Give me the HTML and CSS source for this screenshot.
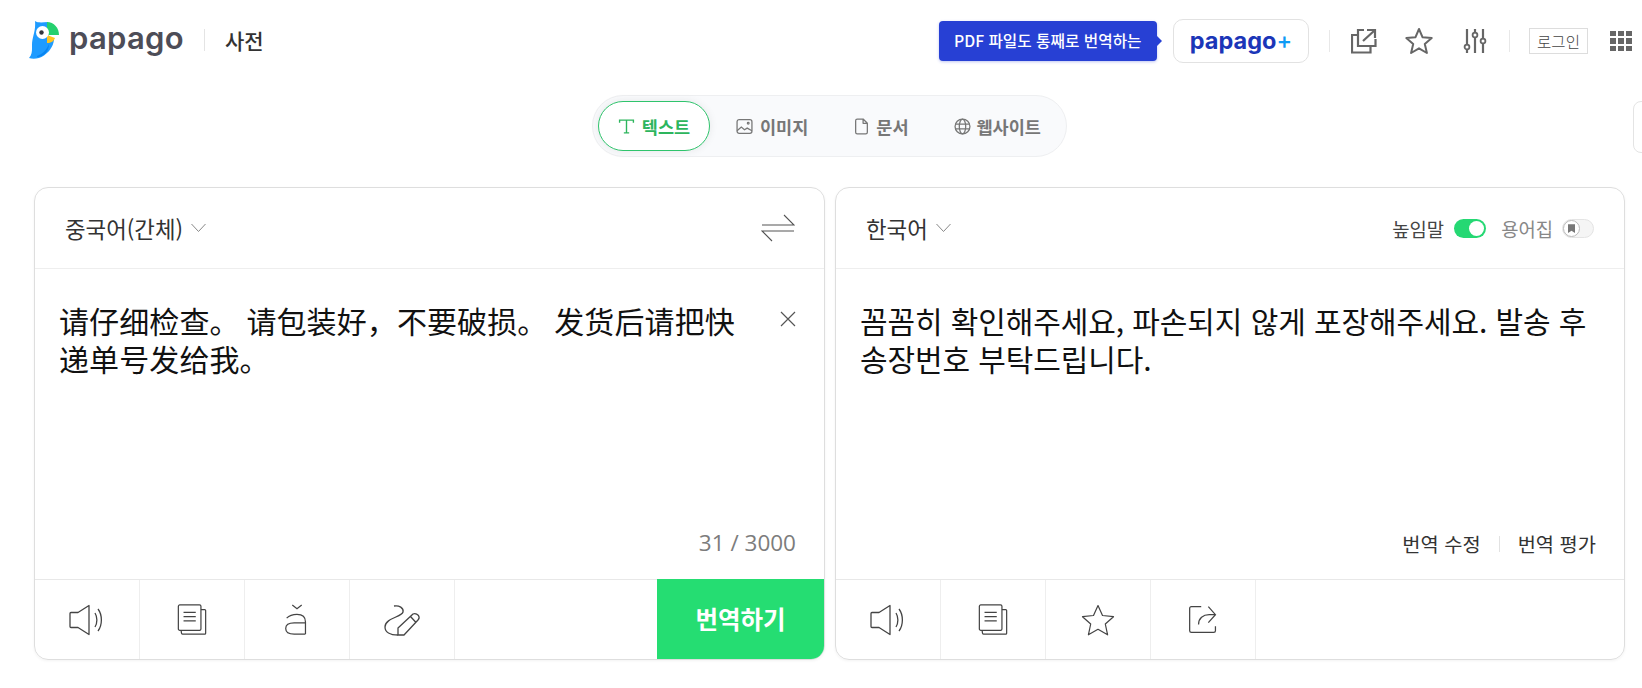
FILE: index.html
```html
<!DOCTYPE html>
<html lang="ko">
<head>
    <meta charset="utf-8">
    <title>papago</title>
    <link rel="stylesheet" href="styles.css">
</head>
<body>

<div class="top">
    <div class="brand">
        <svg class="parrot" viewBox="0 0 30 38">
            <path fill="#1e9bff" d="M6 0C9 2 13 1.500 19 1L19 14L25 19C24 26 20 31 15 34.500C10 38 4 38.500 0 37C3.500 33 3 29 3 24C3 16 7 10 6 0Z"/>
            <path fill="#0a84f0" d="M8 35C14 33 18 28 20 23C20 30 15 36 8 36Z"/>
            <path fill="#25d06e" d="M18 1C25 1 30 7 30 14L18 14Z"/>
            <path fill="#ffc51f" d="M18 14L26 17C25 20 22 22 18 22Z"/>
            <circle fill="#fff" cx="13.500" cy="11.500" r="6.500"/>
            <circle fill="#33343c" cx="12.500" cy="11.500" r="2.200"/>
        </svg>
        <span class="wordmark">papago</span>
        <span class="brand__line"></span>
        <span class="dict">사전</span>
    </div>
    <div class="tools">
        <span class="promo">PDF 파일도 통째로 번역하는</span>
        <span class="plus">papago<b>+</b></span>
        <span class="tools__line"></span>
        <svg class="tool tool--ext" viewBox="0 0 26 26" fill="none" stroke="#666" stroke-width="2.200">
            <path d="M13 2H7V18H24.500V11"/>
            <path d="M7 7H1V24.500H19.500V18"/>
            <path d="M12 13L24 2M16 2H24V10"/>
        </svg>
        <svg class="tool tool--star" viewBox="0 0 28 28" fill="none" stroke="#666" stroke-width="2">
            <path stroke-linejoin="round" d="M14 2L17.600 10.300L26.700 11.100L19.800 17.100L21.900 26L14 21.300L6.100 26L8.200 17.100L1.300 11.100L10.400 10.300Z"/>
        </svg>
        <svg class="tool tool--sliders" viewBox="0 0 24 26" fill="none" stroke="#666" stroke-width="2.200">
            <path d="M4 1V16M4 22V25M12 1V4M12 10V25M20 1V10M20 16V25"/>
            <circle cx="4" cy="19" r="2.400" stroke-width="1.800"/>
            <circle cx="12" cy="7" r="2.400" stroke-width="1.800"/>
            <circle cx="20" cy="13" r="2.400" stroke-width="1.800"/>
        </svg>
        <span class="tools__line tools__line--second"></span>
        <span class="login">로그인</span>
        <span class="apps">
            <i></i><i></i><i></i><i></i><i></i><i></i><i></i><i></i><i></i>
        </span>
    </div>
</div>

<div class="side-tab"></div>

<div class="main">
    <div class="tabs">
        <div class="tab tab--on">
            <svg class="tab__icon" viewBox="0 0 16 16" fill="none" stroke="#2db55d" stroke-width="1.300"><path d="M1.500 4.500V2H14.500V4.500M8 2V14M5.500 14H10.500"/></svg>
            텍스트
        </div>
        <div class="tab tab--image">
            <svg class="tab__icon" viewBox="0 0 16 16" fill="none" stroke="#777" stroke-width="1.200"><rect x="1" y="1.500" width="14" height="13" rx="2"/><path d="M1 12L5 8.500L8 11L10.500 9.500L15 12"/><circle cx="11.500" cy="5" r="0.800"/></svg>
            이미지
        </div>
        <div class="tab tab--doc">
            <svg class="tab__icon" viewBox="0 0 16 16" fill="none" stroke="#777" stroke-width="1.200"><path stroke-linejoin="round" d="M2.500 2.500Q2.500 1 4 1H9.500L13.500 5V13.500Q13.500 15 12 15H4Q2.500 15 2.500 13.500ZM9.500 1V5H13.500"/></svg>
            문서
        </div>
        <div class="tab tab--web">
            <svg class="tab__icon" viewBox="0 0 16 16" fill="none" stroke="#777" stroke-width="1.200"><circle cx="8" cy="8" r="7"/><ellipse cx="8" cy="8" rx="3" ry="7"/><path d="M1 5.700H15M1 10.300H15"/></svg>
            웹사이트
        </div>
    </div>

    <div class="cards">
        <div class="card card--source">
            <div class="card__head">
                <span class="lang">중국어(간체)</span>
                <svg class="chev" viewBox="0 0 16 10" fill="none" stroke="#888" stroke-width="1"><path d="M1 1L8 8.500L15 1"/></svg>
                <svg class="swap" viewBox="0 0 34 28" fill="none" stroke="#555" stroke-width="1.100"><path d="M1 11H33L23 1M33 17H1L11 27"/></svg>
            </div>
            <div class="card__body">
                <div class="source">
                    <p class="source__text" lang="zh-CN">请仔细检查。 请包装好，不要破损。 发货后请把快递单号发给我。</p>
                    <svg class="clear" viewBox="0 0 16 16" fill="none" stroke="#555" stroke-width="1.200"><path d="M1 1L15 15M15 1L1 15"/></svg>
                </div>
                <div class="count">31 / 3000</div>
            </div>
            <div class="card__foot">
                <div class="cell">
                    <svg class="cell__icon" viewBox="0 0 36 32" fill="none" stroke="#444" stroke-width="1.300"><path stroke-linejoin="round" d="M2 8.500H9L20 1.500V30.500L9 23.500H2Q1 23.500 1 22.500V9.500Q1 8.500 2 8.500Z"/><path d="M26 9C28.500 13 28.500 19 26 23M29 5C33.500 11 33.500 21 29 27"/></svg>
                </div>
                <div class="cell">
                    <svg class="cell__icon" viewBox="0 0 32 34" fill="none" stroke="#444" stroke-width="1.300"><rect x="1.500" y="1" width="24" height="27" rx="1.500"/><path d="M25.500 6H29.500Q30.500 6 30.500 7V31Q30.500 32 29.500 32H6Q4.500 32 4.500 28M7 9H20M7 13.500H20M7 18H20"/></svg>
                </div>
                <div class="cell">
                    <svg class="cell__icon" viewBox="0 0 28 34" fill="none" stroke="#444" stroke-width="1.300"><path d="M9 1L14 5L19 1M3 15Q7 11 14 11Q23 11 23 19V32M23 20H11Q2 20 2 26Q2 32 11 32H23"/></svg>
                </div>
                <div class="cell">
                    <svg class="cell__icon cell__icon--wide" viewBox="0 0 38 32" fill="none" stroke="#444" stroke-width="1.300"><path d="M11 2C16 1 21 4 20 8C19 13 2 14 2 23C2 28 7 31 15 31"/><path stroke-linejoin="round" d="M15 31V24L30 10Q33 9 35.500 11.500Q37 14 35 16L21 31ZM27.500 12.500L33 18.500"/></svg>
                </div>
                <div class="cell cell--grow"></div>
                <div class="go">번역하기</div>
            </div>
        </div>

        <div class="card">
            <div class="card__head">
                <span class="lang">한국어</span>
                <svg class="chev" viewBox="0 0 16 10" fill="none" stroke="#888" stroke-width="1"><path d="M1 1L8 8.500L15 1"/></svg>
                <div class="opts">
                    <span class="opts__label">높임말</span>
                    <span class="toggle"></span>
                    <span class="opts__label opts__label--off">용어집</span>
                    <span class="toggle toggle--off">
                        <svg class="toggle__mark" viewBox="0 0 8 10"><path fill="#777" d="M0 0H8V10L4 7.500L0 10Z"/></svg>
                    </span>
                </div>
            </div>
            <div class="card__body">
                <p class="target">꼼꼼히 확인해주세요, 파손되지 않게 포장해주세요. 발송 후 송장번호 부탁드립니다.</p>
                <div class="links">
                    <span>번역 수정</span>
                    <span class="links__line"></span>
                    <span>번역 평가</span>
                </div>
            </div>
            <div class="card__foot">
                <div class="cell">
                    <svg class="cell__icon" viewBox="0 0 36 32" fill="none" stroke="#444" stroke-width="1.300"><path stroke-linejoin="round" d="M2 8.500H9L20 1.500V30.500L9 23.500H2Q1 23.500 1 22.500V9.500Q1 8.500 2 8.500Z"/><path d="M26 9C28.500 13 28.500 19 26 23M29 5C33.500 11 33.500 21 29 27"/></svg>
                </div>
                <div class="cell">
                    <svg class="cell__icon" viewBox="0 0 32 34" fill="none" stroke="#444" stroke-width="1.300"><rect x="1.500" y="1" width="24" height="27" rx="1.500"/><path d="M25.500 6H29.500Q30.500 6 30.500 7V31Q30.500 32 29.500 32H6Q4.500 32 4.500 28M7 9H20M7 13.500H20M7 18H20"/></svg>
                </div>
                <div class="cell">
                    <svg class="cell__icon" viewBox="0 0 34 32" fill="none" stroke="#444" stroke-width="1.200"><path stroke-linejoin="round" d="M17 1.500L21.500 11.500L32.500 12.700L24.300 20L26.600 30.800L17 25.300L7.400 30.800L9.700 20L1.500 12.700L12.500 11.500Z"/></svg>
                </div>
                <div class="cell">
                    <svg class="cell__icon" viewBox="-2 -2 36 36" fill="none" stroke="#444" stroke-width="1.400"><path d="M14 1H3Q1 1 1 3V28Q1 30 3 30H28Q30 30 30 28V23M11 21C11 14 16 10 23 10H30M22 1L30 10L22 19"/></svg>
                </div>
                <div class="cell cell--grow"></div>
            </div>
        </div>
    </div>
</div>

</body>
</html>
```

FILE: styles.css
```css
body {
    margin: 0;
    height: 688px;
    overflow: hidden;
    background: #fff;
    color: #222;
    font-family: "Noto Sans CJK KR", "Noto Sans", sans-serif;
}

/*---------Top bar-------------*/
.top {
    height: 82px;
    display: flex;
    align-items: center;
    justify-content: space-between;
    padding: 0 10px 0 29px;
}

.brand {
    display: flex;
    align-items: center;
    padding-bottom: 2px;
}

.parrot {
    width: 30px;
    height: 38px;
}

.wordmark {
    margin: 0 0 5px 10px;
    font-family: Inter, sans-serif;
    font-size: 31px;
    font-weight: 600;
    color: #4d4d57;
    letter-spacing: 0.3px;
}

.brand__line {
    width: 1px;
    height: 22px;
    margin: 0 20px;
    background: #e4e4e4;
}

.dict {
    font-size: 21px;
    font-weight: 500;
    color: #333;
}

.tools {
    display: flex;
    align-items: center;
}

.promo {
    position: relative;
    width: 218px;
    height: 40px;
    box-sizing: border-box;
    margin-right: 16px;
    padding-left: 15px;
    line-height: 40px;
    font-size: 15.700px;
    font-weight: 500;
    color: #fff;
    background: #2740d4;
    border-radius: 4px;
    box-shadow: 0 1px 3px rgba(39, 64, 212, 0.3);
}

.promo:after {
    content: "";
    position: absolute;
    right: -5px;
    top: 15px;
    border-left: 5px solid #2740d4;
    border-top: 5px solid transparent;
    border-bottom: 5px solid transparent;
}

.plus {
    width: 136px;
    height: 44px;
    box-sizing: border-box;
    border: 1px solid #e2e2e2;
    border-radius: 10px;
    text-align: center;
    line-height: 41px;
    font-family: Inter, sans-serif;
    font-size: 23.500px;
    font-weight: 700;
    color: #1b36b8;
}

.plus b {
    font-weight: 500;
    color: #0f9bf5;
}

.tools__line {
    width: 1px;
    height: 22px;
    margin: 0 21px 0 20px;
    background: #e8e8e8;
}

.tools__line--second {
    margin: 0 19px 0 22px;
}

.tool--ext {
    width: 26px;
    height: 26px;
}

.tool--star {
    width: 28px;
    height: 28px;
    margin-left: 28px;
}

.tool--sliders {
    width: 24px;
    height: 26px;
    margin-left: 30px;
}

.login {
    width: 59px;
    height: 26px;
    box-sizing: border-box;
    border: 1px solid #ddd;
    text-align: center;
    line-height: 24px;
    font-size: 15.500px;
    font-weight: 300;
    color: #444;
}

.apps {
    width: 22px;
    display: grid;
    grid-template-columns: repeat(3, 6px);
    gap: 2px;
    margin-left: 22px;
}

.apps i {
    height: 5.500px;
    background: #666;
}

.side-tab {
    position: absolute;
    left: 1633px;
    top: 101px;
    width: 20px;
    height: 52px;
    box-sizing: border-box;
    border: 1px solid #e4e4e4;
    border-radius: 8px;
}

/*---------Tabs-------------*/
.main {
    padding: 13px 17px 0 34px;
}

.tabs {
    width: 475px;
    height: 62px;
    box-sizing: border-box;
    margin: 0 auto 30px;
    padding: 5px;
    display: flex;
    align-items: center;
    background: #f9fafc;
    border: 1px solid #eeeff1;
    border-radius: 31px;
}

.tab {
    display: flex;
    align-items: center;
    height: 50px;
    box-sizing: border-box;
    font-size: 17.500px;
    font-weight: 700;
    color: #777;
}

.tab__icon {
    width: 17px;
    height: 17px;
    margin-right: 7px;
}

.tab--on {
    width: 112px;
    margin-right: 26px;
    justify-content: center;
    background: #fff;
    color: #2db55d;
    border: 1px solid #2fc46c;
    border-radius: 25px;
    box-shadow: 0 0 8px rgba(0, 0, 0, 0.08);
}

.tab--image {
    margin-right: 45px;
}

.tab--doc {
    margin-right: 45px;
}

.tab--doc .tab__icon,
.tab--web .tab__icon {
    margin-right: 6px;
}

/*---------Cards-------------*/
.cards {
    display: flex;
    gap: 10px;
}

.card {
    flex: 1;
    height: 473px;
    box-sizing: border-box;
    display: flex;
    flex-direction: column;
    border: 1px solid #dedede;
    border-radius: 14px;
    overflow: hidden;
    box-shadow: 0 1px 3px rgba(0, 0, 0, 0.05);
}

.card--source {
    flex: 0 0 791px;
}

.card__head {
    height: 81px;
    flex: none;
    box-sizing: border-box;
    display: flex;
    align-items: center;
    padding: 0 29px 0 30px;
    border-bottom: 1px solid #eee;
}

.lang {
    font-size: 22.400px;
    color: #333;
}

.chev {
    width: 17px;
    height: 10px;
    margin-left: 7px;
}

.swap {
    width: 34px;
    height: 28px;
    margin-left: auto;
}

.opts {
    margin: 0 1px 0 auto;
    display: flex;
    align-items: center;
}

.opts__label {
    font-size: 18.800px;
    color: #444;
}

.opts__label--off {
    margin-left: 15px;
    color: #888;
}

.toggle {
    position: relative;
    width: 32px;
    height: 19px;
    margin-left: 10px;
    background: #25d873;
    border-radius: 10px;
}

.toggle:after {
    content: "";
    position: absolute;
    right: 2px;
    top: 2px;
    width: 15px;
    height: 15px;
    background: #fff;
    border-radius: 50%;
}

.toggle--off {
    margin-left: 9px;
    background: #f5f5f5;
    border: 1px solid #e4e4e4;
    box-sizing: border-box;
}

.toggle--off:after {
    left: 0;
    top: 0;
    width: 17px;
    height: 17px;
    border: 1px solid #bbb;
    box-sizing: border-box;
}

.toggle__mark {
    position: absolute;
    left: 5px;
    top: 4px;
    width: 7px;
    height: 9px;
    z-index: 1;
}

.card__body {
    flex: 1;
    display: flex;
    flex-direction: column;
    justify-content: space-between;
    padding: 31px 28px 21px 24px;
}

.source {
    display: flex;
    align-items: flex-start;
}

.source__text {
    flex: 1;
    margin: 1px 0 0;
    padding-right: 30px;
    font-family: "Noto Sans CJK SC", sans-serif;
    font-size: 30px;
    line-height: 38px;
    letter-spacing: 0.1px;
    color: #111;
}

.clear {
    width: 16px;
    height: 16px;
    margin-top: 11px;
}

.count {
    text-align: right;
    font-family: "Open Sans", sans-serif;
    font-size: 22.500px;
    color: #7c7c7c;
}

.target {
    margin: 1px 0 0;
    font-size: 30px;
    line-height: 38px;
    letter-spacing: -0.1px;
    color: #111;
}

.links {
    display: flex;
    align-items: center;
    justify-content: flex-end;
    font-size: 19.800px;
    color: #333;
}

.links__line {
    width: 1px;
    height: 16px;
    margin: 0 18px;
    background: #e2e2e2;
}

.card__foot {
    height: 80px;
    flex: none;
    box-sizing: border-box;
    display: flex;
    border-top: 1px solid #e8e8e8;
}

.cell {
    width: 105px;
    flex: none;
    box-sizing: border-box;
    display: flex;
    align-items: center;
    justify-content: center;
    border-right: 1px solid #eee;
}

.cell--grow {
    flex: 1;
    width: auto;
    border-right: none;
}

.cell__icon {
    width: 36px;
    height: 32px;
}

.cell__icon--wide {
    width: 38px;
}

.go {
    width: 167px;
    flex: none;
    margin-top: -1px;
    text-align: center;
    line-height: 80px;
    font-size: 24.500px;
    font-weight: 700;
    color: #fff;
    background: #25dd72;
}
```
